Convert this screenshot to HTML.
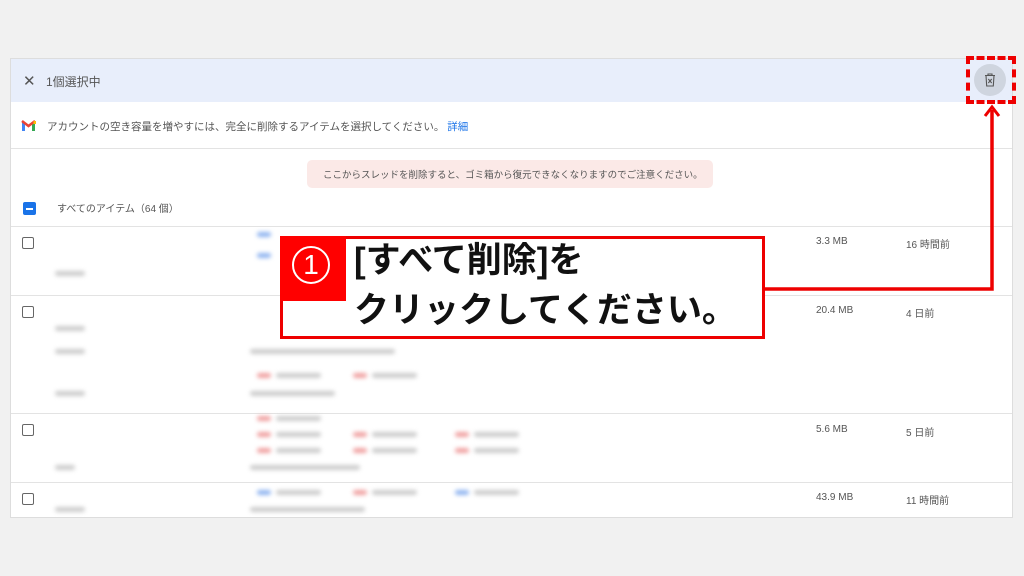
<!DOCTYPE html>
<html><head><meta charset="utf-8"><style>
*{margin:0;padding:0;box-sizing:border-box}
body{width:1024px;height:576px;background:#f1f1f1;font-family:"Liberation Sans","Noto Sans CJK JP",sans-serif;position:relative;overflow:hidden;color:#444}
.abs{position:absolute}
.panel{left:10px;top:58px;width:1003px;height:460px;background:#fff;border:1px solid #ddd}
.hdr{left:11px;top:59px;width:1001px;height:43px;background:#e8eefb}
.line{height:1px;background:#e3e3e3}
.t{font-size:11px;color:#555;white-space:nowrap}
.cb{width:12px;height:12px;border:1.5px solid #666;border-radius:2px}
.b{filter:blur(2px);height:5px;border-radius:3px}
.g{background:#ccc}.bl{background:#8fb4f0}.rd{background:#f0a0a0}
</style></head><body>
<div class="abs panel"></div>
<div class="abs hdr"></div>
<div class="abs t" style="left:23px;top:72px;font-size:15px;color:#555">✕</div>
<div class="abs t" style="left:46px;top:73px;font-size:12px">1個選択中</div>
<svg class="abs" style="left:21px;top:119px" width="15" height="12" viewBox="0 0 15 12"><path d="M1 2v10h3V5z" fill="#4285f4"/><path d="M14 2v10h-3V5z" fill="#34a853"/><path d="M1 2l6.5 5L14 2" stroke="#ea4335" stroke-width="2.5" fill="none"/><path d="M14 2v3" stroke="#fbbc04" stroke-width="3"/></svg>
<div class="abs t" style="left:47px;top:119px;font-size:10.5px">アカウントの空き容量を増やすには、完全に削除するアイテムを選択してください。 <span style="color:#1a73e8">詳細</span></div>
<div class="abs line" style="left:11px;top:148px;width:1001px"></div>
<div class="abs" style="left:307px;top:160px;width:406px;height:28px;background:#fbe9e7;border-radius:5px"></div>
<div class="abs t" style="left:323px;top:167px;font-size:9.5px">ここからスレッドを削除すると、ゴミ箱から復元できなくなりますのでご注意ください。</div>
<div class="abs" style="left:23px;top:202px;width:13px;height:13px;background:#1a73e8;border-radius:2px"><div style="margin:5.5px 3px;height:2px;background:#fff"></div></div>
<div class="abs t" style="left:57px;top:200px;font-size:10px">すべてのアイテム（64 個）</div>
<div class="abs line" style="left:11px;top:226px;width:1001px"></div>
<div class="abs line" style="left:11px;top:295px;width:1001px"></div>
<div class="abs line" style="left:11px;top:413px;width:1001px"></div>
<div class="abs line" style="left:11px;top:482px;width:1001px"></div>
<div class="abs cb" style="left:22px;top:237px"></div>
<div class="abs cb" style="left:22px;top:306px"></div>
<div class="abs cb" style="left:22px;top:424px"></div>
<div class="abs cb" style="left:22px;top:493px"></div>
<div class="abs b g" style="left:55px;top:271px;width:30px"></div>
<div class="abs b g" style="left:55px;top:326px;width:30px"></div>
<div class="abs b g" style="left:55px;top:349px;width:30px"></div>
<div class="abs b g" style="left:55px;top:391px;width:30px"></div>
<div class="abs b g" style="left:55px;top:465px;width:20px"></div>
<div class="abs b g" style="left:55px;top:507px;width:30px"></div>
<div class="abs b bl" style="left:257px;top:232px;width:14px"></div>
<div class="abs b bl" style="left:257px;top:253px;width:14px"></div>
<div class="abs b g" style="left:250px;top:349px;width:145px"></div>
<div class="abs b rd" style="left:257px;top:373px;width:14px"></div><div class="abs b g" style="left:276px;top:373px;width:45px"></div>
<div class="abs b rd" style="left:353px;top:373px;width:14px"></div><div class="abs b g" style="left:372px;top:373px;width:45px"></div>
<div class="abs b g" style="left:250px;top:391px;width:85px"></div>
<div class="abs b rd" style="left:257px;top:416px;width:14px"></div><div class="abs b g" style="left:276px;top:416px;width:45px"></div>
<div class="abs b rd" style="left:257px;top:432px;width:14px"></div><div class="abs b g" style="left:276px;top:432px;width:45px"></div>
<div class="abs b rd" style="left:353px;top:432px;width:14px"></div><div class="abs b g" style="left:372px;top:432px;width:45px"></div>
<div class="abs b rd" style="left:455px;top:432px;width:14px"></div><div class="abs b g" style="left:474px;top:432px;width:45px"></div>
<div class="abs b rd" style="left:257px;top:448px;width:14px"></div><div class="abs b g" style="left:276px;top:448px;width:45px"></div>
<div class="abs b rd" style="left:353px;top:448px;width:14px"></div><div class="abs b g" style="left:372px;top:448px;width:45px"></div>
<div class="abs b rd" style="left:455px;top:448px;width:14px"></div><div class="abs b g" style="left:474px;top:448px;width:45px"></div>
<div class="abs b g" style="left:250px;top:465px;width:110px"></div>
<div class="abs b bl" style="left:257px;top:490px;width:14px"></div><div class="abs b g" style="left:276px;top:490px;width:45px"></div>
<div class="abs b rd" style="left:353px;top:490px;width:14px"></div><div class="abs b g" style="left:372px;top:490px;width:45px"></div>
<div class="abs b bl" style="left:455px;top:490px;width:14px"></div><div class="abs b g" style="left:474px;top:490px;width:45px"></div>
<div class="abs b g" style="left:250px;top:507px;width:115px"></div>
<div class="abs t" style="left:816px;top:236px;font-size:10px">3.3 MB</div><div class="abs t" style="left:906px;top:236px;font-size:10px">16 時間前</div>
<div class="abs t" style="left:816px;top:305px;font-size:10px">20.4 MB</div><div class="abs t" style="left:906px;top:305px;font-size:10px">4 日前</div>
<div class="abs t" style="left:816px;top:424px;font-size:10px">5.6 MB</div><div class="abs t" style="left:906px;top:424px;font-size:10px">5 日前</div>
<div class="abs t" style="left:816px;top:492px;font-size:10px">43.9 MB</div><div class="abs t" style="left:906px;top:492px;font-size:10px">11 時間前</div>
<div class="abs" style="left:974px;top:64px;width:32px;height:32px;border-radius:50%;background:#cfd5df"></div>
<svg class="abs" style="left:984px;top:73px" width="12" height="14" viewBox="0 0 12 14"><path d="M1 2.5h10M4 2.5V1h4v1.5M2 2.5l.7 10.5h6.6L10 2.5M4.3 6l3.4 4M7.7 6l-3.4 4" stroke="#555" stroke-width="1.1" fill="none"/></svg>
<div class="abs" style="left:966px;top:56px;width:50px;height:48px;border:4px dashed #e00"></div>
<svg class="abs" style="left:0;top:0" width="1024" height="576"><path d="M764 289H992V110" stroke="#e00" stroke-width="3.5" fill="none"/><path d="M985 116l7-9 7 9" stroke="#e00" stroke-width="3" fill="none"/></svg>
<div class="abs" style="left:280px;top:236px;width:485px;height:103px;background:#fff;border:3px solid #e00"></div>
<div class="abs" style="left:280px;top:236px;width:66px;height:65px;background:#f00"></div>
<div class="abs" style="left:292px;top:246px;width:38px;height:38px;border:2px solid #fff;border-radius:50%;color:#fff;font:28px/34px 'Liberation Sans',sans-serif;text-align:center">1</div>
<div class="abs" style="left:354px;top:238px;font:bold 35px/46px 'Liberation Sans','Noto Sans CJK JP',sans-serif;color:#111;white-space:nowrap">[すべて削除]を</div>
<div class="abs" style="left:354px;top:288px;font:bold 35px/46px 'Liberation Sans','Noto Sans CJK JP',sans-serif;color:#111;white-space:nowrap">クリックしてください。</div>
</body></html>
